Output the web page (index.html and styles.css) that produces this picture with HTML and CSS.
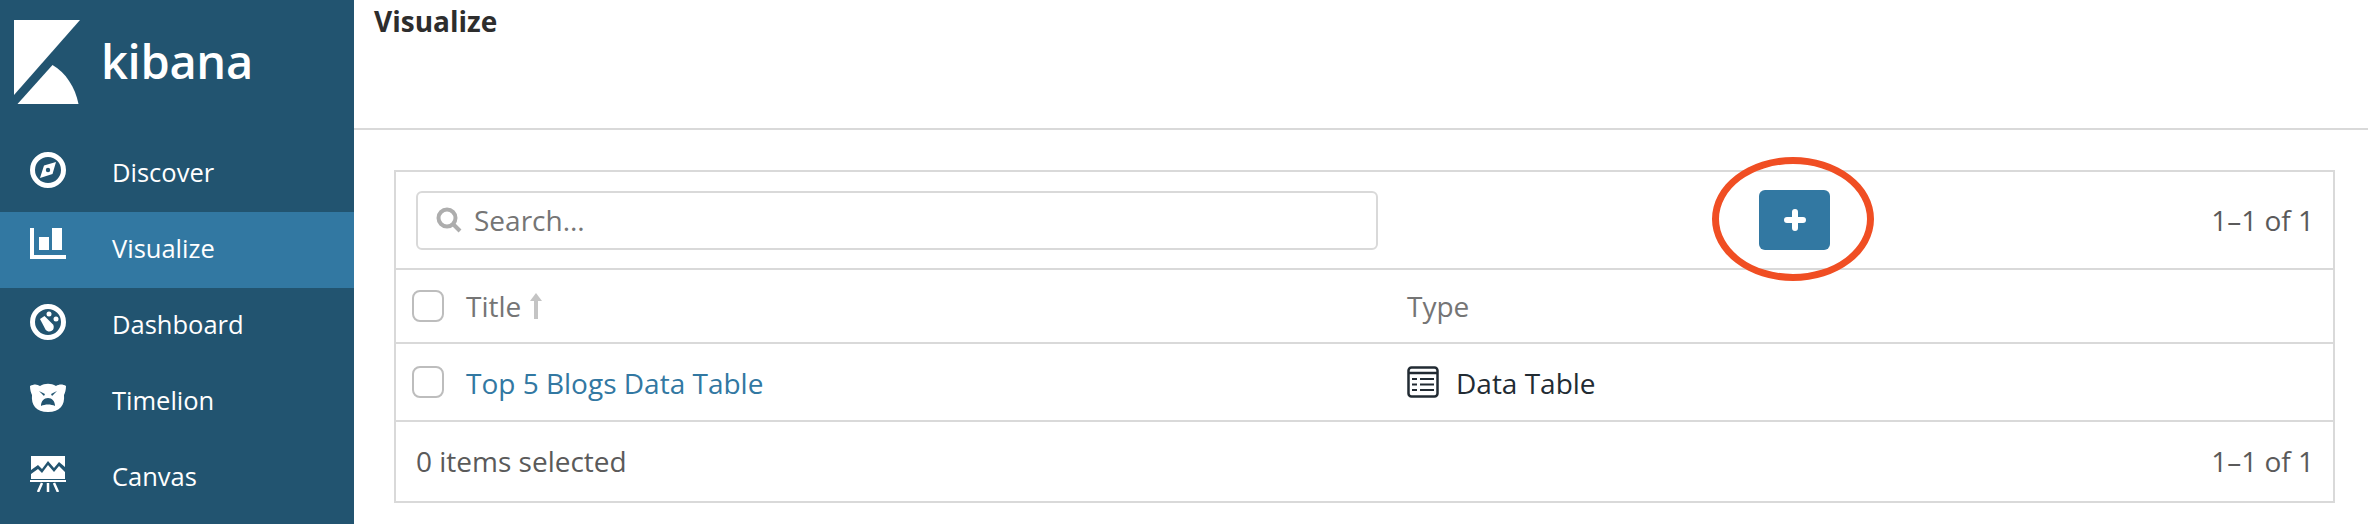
FILE: index.html
```html
<!doctype html>
<html lang="en">
    <head>
        <meta charset="UTF-8" />
        <title>Visualize - Kibana</title>
        <link rel="stylesheet" href="styles.css">
    </head>
    <body>
        <div class="app">
            <nav class="sidebar">
                <div class="brand">
                    <svg class="brand-logo" viewBox="0 0 80 90" width="80" height="90">
                        <path d="M0 0H66L0 75Z" fill="#fff"/>
                        <path d="M3.500 84L38.500 45C52 53 61 67 64.500 84Z" fill="#fff"/>
                    </svg>
                    <span class="brand-name">kibana</span>
                </div>
                <a class="nav-item">
                    <svg class="nav-icon" viewBox="0 0 36 36" width="36" height="36">
                        <circle cx="18" cy="18" r="15.500" fill="none" stroke="#fff" stroke-width="5"/>
                        <path d="M26 10L22.500 22L14 13.500Z M10 26L14 13.500L22.500 22Z" fill="#fff"/>
                        <circle cx="18" cy="18" r="2.200" fill="#225470"/>
                    </svg>
                    <span>Discover</span>
                </a>
                <a class="nav-item active">
                    <svg class="nav-icon" viewBox="0 0 36 36" width="36" height="36">
                        <path d="M0 0H4V27H36V31H0Z" fill="#fff"/>
                        <path d="M9 9H19V22H9Z M22 0H32V22H22Z" fill="#fff"/>
                    </svg>
                    <span>Visualize</span>
                </a>
                <a class="nav-item">
                    <svg class="nav-icon" viewBox="0 0 36 36" width="36" height="36">
                        <circle cx="18" cy="18" r="15.500" fill="none" stroke="#fff" stroke-width="5"/>
                        <path d="M10 15L14.500 12L23 20.500A4.500 4.500 0 1 1 15.500 25.500Z" fill="#fff"/>
                        <circle cx="19" cy="10" r="2.500" fill="#fff"/>
                        <circle cx="26" cy="15" r="2.500" fill="#fff"/>
                    </svg>
                    <span>Dashboard</span>
                </a>
                <a class="nav-item">
                    <svg class="nav-icon" viewBox="0 0 36 36" width="36" height="36">
                        <path fill-rule="evenodd" fill="#fff" d="M0 6C4 4 7 4 10 6C15 3 21 3 26 6C29 4 33 4 36 6C36 10 35 13 34 15C35 25 30 32 18 32C6 32 1 25 2 15C1 13 0 10 0 6ZM9 11L15 14L14 16ZM27 11L21 14L22 16ZM18 18C14 18 11 21 11 26C15 24 21 24 25 26C25 21 22 18 18 18Z"/>
                    </svg>
                    <span>Timelion</span>
                </a>
                <a class="nav-item">
                    <svg class="nav-icon" viewBox="0 0 36 36" width="36" height="36">
                        <path fill-rule="evenodd" fill="#fff" d="M1 0H35V23H1ZM1 14L8 9L12 13L18 5L24 12L29 6L35 11V16L29 10L24 16L18 9L12 17L8 13L1 18Z"/>
                        <path d="M0 24H36V26H0Z" fill="#fff"/>
                        <path d="M8 36L12 27M18 27V36M24 27L28 36" stroke="#fff" stroke-width="2.500" fill="none"/>
                    </svg>
                    <span>Canvas</span>
                </a>
            </nav>

            <main class="content">
                <header class="page-header">
                    <h1>Visualize</h1>
                </header>
                <section class="listing">
                    <div class="toolbar">
                        <div class="search">
                            <svg class="search-icon" viewBox="0 0 26 26" width="26" height="26">
                                <circle cx="11" cy="11" r="8.500" fill="none" stroke="#adadad" stroke-width="4"/>
                                <path d="M17 17L24 24" stroke="#adadad" stroke-width="4" fill="none"/>
                            </svg>
                            <span>Search...</span>
                        </div>
                        <div class="add-slot">
                            <button type="button" class="add-btn">
                                <svg viewBox="0 0 22 22" width="22" height="22">
                                    <path d="M11 3V19M3 11H19" stroke="#fff" stroke-width="6" stroke-linecap="round" fill="none"/>
                                </svg>
                            </button>
                            <div class="marker"></div>
                        </div>
                        <div class="pager">1–1 of 1</div>
                    </div>
                    <div class="row head-row">
                        <span class="check"></span>
                        <div class="col-title">Title <span class="sort">
                            <svg viewBox="0 0 14 28" width="14" height="28">
                                <path d="M7 1L13 9H9V27H5V9H1Z" fill="#c4c4c4"/>
                            </svg>
                        </span></div>
                        <div class="col-type">Type</div>
                    </div>
                    <div class="row item-row">
                        <span class="check"></span>
                        <div class="col-title"><a class="item-link">Top 5 Blogs Data Table</a></div>
                        <div class="col-type item-type">
                            <svg viewBox="0 0 32 32" width="32" height="32">
                                <rect x="1.500" y="1.500" width="29" height="29" rx="3" fill="none" stroke="#222b33" stroke-width="2.500"/>
                                <path d="M1.500 7H30.500" stroke="#222b33" stroke-width="2.500"/>
                                <path d="M5 13H10M13 13H27M5 18.500H10M13 18.500H27M5 24H10M13 24H27" stroke="#222b33" stroke-width="2"/>
                            </svg>
                            <span>Data Table</span>
                        </div>
                    </div>
                    <div class="footer-row">
                        <span>0 items selected</span>
                        <span>1–1 of 1</span>
                    </div>
                </section>
            </main>
        </div>
    </body>
</html>
```

FILE: styles.css
```css
html, body {
    margin: 0;
    height: 524px;
    overflow: hidden;
}
body {
    font-family: "Open Sans", sans-serif;
    background-color: #fff;
    color: #5a5a5a;
}
.app {
    display: flex;
    height: 524px;
}
.sidebar {
    width: 354px;
    flex-shrink: 0;
    background-color: #225470;
    color: #fff;
}
.brand {
    display: flex;
    height: 136px;
    box-sizing: border-box;
    padding: 20px 0 0 14px;
}
.brand-logo {
    flex-shrink: 0;
}
.brand-name {
    margin: 9px 0 0 7px;
    font-size: 47px;
    line-height: 64px;
    font-weight: 600;
    letter-spacing: -0.3px;
}
.nav-item {
    display: flex;
    align-items: center;
    height: 76px;
    padding-left: 30px;
    font-size: 25.500px;
}
.nav-item span {
    margin-left: 46px;
    padding-bottom: 5px;
}
.nav-icon {
    flex-shrink: 0;
    margin-top: -8px;
}
.nav-item.active {
    background-color: #3278a2;
}
.content {
    flex: 1;
    min-width: 0;
}
.page-header {
    height: 128px;
    border-bottom: 2px solid #d9d9d9;
    padding-left: 20px;
}
.page-header h1 {
    margin: 0;
    padding-top: 3px;
    font-size: 28px;
    line-height: 36px;
    font-weight: 700;
    color: #2d2d2d;
}
.listing {
    margin: 40px 33px 0 40px;
    border: 2px solid #d9d9d9;
    font-size: 28px;
}
.toolbar {
    display: flex;
    align-items: center;
    height: 96px;
    padding: 0 19px 0 20px;
    border-bottom: 2px solid #d9d9d9;
}
.search {
    display: flex;
    align-items: center;
    width: 962px;
    height: 59px;
    box-sizing: border-box;
    border: 2px solid #d9d9d9;
    border-radius: 6px;
    padding-left: 18px;
    color: #757575;
}
.search-icon {
    margin-right: 12px;
}
.add-slot {
    position: relative;
    margin-left: 381px;
}
.add-btn {
    display: flex;
    align-items: center;
    justify-content: center;
    width: 71px;
    height: 60px;
    border: none;
    border-radius: 6px;
    padding: 0;
    background-color: #3278a2;
}
.marker {
    position: absolute;
    left: -47px;
    top: -33px;
    width: 162px;
    height: 124px;
    box-sizing: border-box;
    border: 7px solid #f04e23;
    border-radius: 50%;
}
.pager {
    margin-left: auto;
}
.row {
    display: flex;
    align-items: center;
    border-bottom: 2px solid #d9d9d9;
}
.head-row {
    height: 72px;
    color: #757575;
}
.item-row {
    height: 76px;
}
.check {
    flex-shrink: 0;
    width: 32px;
    height: 32px;
    box-sizing: border-box;
    margin-left: 16px;
    border: 2px solid #bdbdbd;
    border-radius: 8px;
    background-color: #fff;
}
.col-title {
    display: flex;
    align-items: center;
    width: 941px;
    margin-left: 22px;
    flex-shrink: 0;
}
.sort {
    display: flex;
    margin-left: 8px;
}
.item-link {
    color: #3278a2;
    padding-top: 2px;
}
.item-type {
    display: flex;
    align-items: center;
    color: #222b33;
}
.item-type span {
    margin-left: 17px;
    padding-top: 2px;
}
.footer-row {
    display: flex;
    justify-content: space-between;
    align-items: center;
    height: 79px;
    padding: 0 19px 2px 20px;
    box-sizing: border-box;
}
```
